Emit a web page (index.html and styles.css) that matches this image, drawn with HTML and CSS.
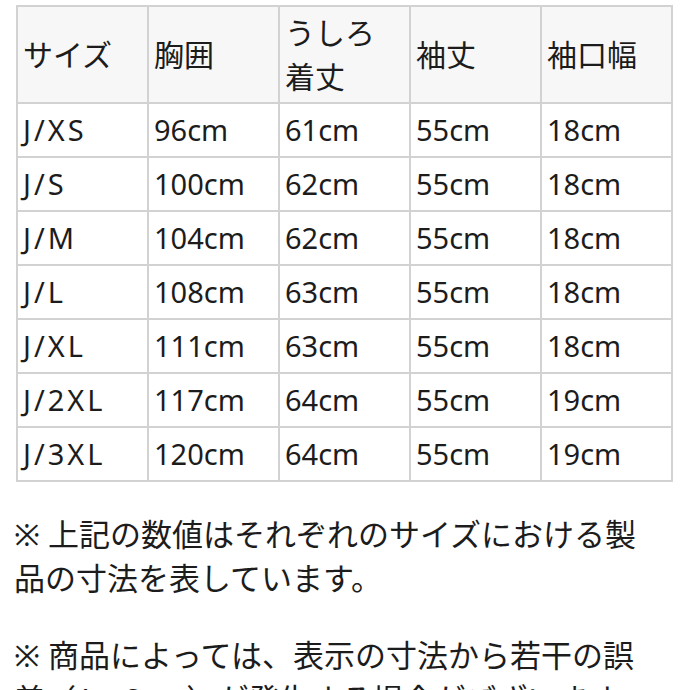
FILE: index.html
```html
<!DOCTYPE html>
<html lang="ja">
<head>
<meta charset="utf-8">
<link rel="stylesheet" href="styles.css">
</head>
<body>
<div class="page">
  <table class="size-table">
    <thead>
      <tr>
        <th>サイズ</th>
        <th>胸囲</th>
        <th>うしろ<br>着丈</th>
        <th>袖丈</th>
        <th>袖口幅</th>
      </tr>
    </thead>
    <tbody>
      <tr><td class="size">J/XS</td><td>96cm</td><td>61cm</td><td>55cm</td><td>18cm</td></tr>
      <tr><td class="size">J/S</td><td>100cm</td><td>62cm</td><td>55cm</td><td>18cm</td></tr>
      <tr><td class="size">J/M</td><td>104cm</td><td>62cm</td><td>55cm</td><td>18cm</td></tr>
      <tr><td class="size">J/L</td><td>108cm</td><td>63cm</td><td>55cm</td><td>18cm</td></tr>
      <tr><td class="size">J/XL</td><td>111cm</td><td>63cm</td><td>55cm</td><td>18cm</td></tr>
      <tr><td class="size">J/2XL</td><td>117cm</td><td>64cm</td><td>55cm</td><td>19cm</td></tr>
      <tr><td class="size">J/3XL</td><td>120cm</td><td>64cm</td><td>55cm</td><td>19cm</td></tr>
    </tbody>
  </table>
  <p class="note">※ 上記の数値はそれぞれのサイズにおける製品の寸法を表しています。</p>
  <p class="note">※ 商品によっては、表示の寸法から若干の誤差（1〜2cm）が発生する場合がございます。</p>
</div>
</body>
</html>
```
FILE: styles.css
```css
html, body {
  margin: 0;
  padding: 0;
  background: #ffffff;
}
body {
  font-family: "Noto Sans", "Noto Sans CJK JP", sans-serif;
  color: #1c1c1c;
}
.page {
  padding: 5px 18px 0 14px;
  width: 658px;
}
.size-table {
  border-collapse: collapse;
  margin-left: 2px;
  table-layout: fixed;
  width: 657px;
}
.size-table th,
.size-table td {
  border: 2px solid #d2d2d2;
  font-size: 29px;
  font-weight: normal;
  text-align: left;
  padding: 0 5px;
  line-height: 44px;
  vertical-align: middle;
}
.size-table th {
  background: #f7f7f7;
  height: 95px;
  font-size: 30px;
}
.size-table td {
  height: 52px;
}
.size-table td.size {
  letter-spacing: 3px;
}
.note {
  font-size: 31px;
  line-height: 44px;
  margin: 30px 0 0 0;
  width: 645px;
}
.note + .note {
  margin-top: 33px;
}
```
